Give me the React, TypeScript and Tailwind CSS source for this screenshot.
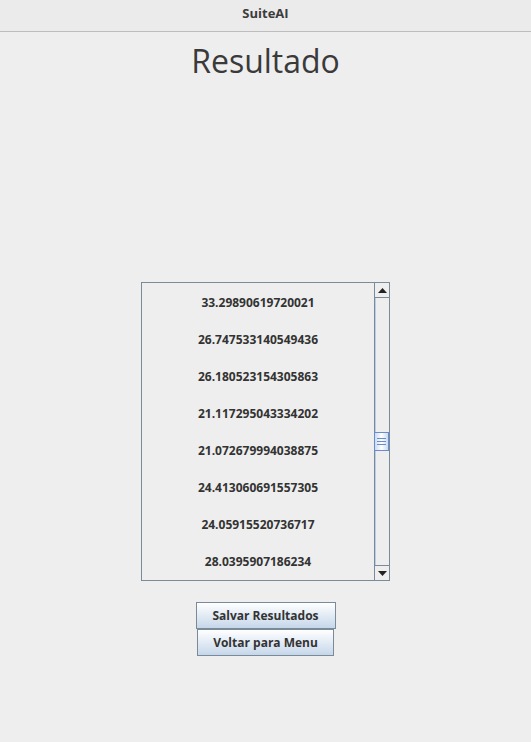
const valores = [
  "33.29890619720021",
  "26.747533140549436",
  "26.180523154305863",
  "21.117295043334202",
  "21.072679994038875",
  "24.413060691557305",
  "24.05915520736717",
  "28.0395907186234",
];

function Arrow({ up }: { up?: boolean }) {
  return (
    <svg width="9" height="5" viewBox="0 0 9 5" className="block">
      {up ? <path d="M0 5 L4.5 0 L9 5 Z" fill="#222" /> : <path d="M0 0 L9 0 L4.5 5 Z" fill="#222" />}
    </svg>
  );
}

function ScrollBar() {
  return (
    <div className="w-[15px] flex flex-col border-l border-[#7a8a99]">
      <div className="h-[15px] flex items-center justify-center bg-[#eeeeee] border-b border-[#7a8a99]">
        <Arrow up />
      </div>
      <div className="flex-1 flex flex-col border-l border-[#b8cfe5]">
        <div className="h-[134px]" />
        <div className="h-[19px] -ml-[2px] border border-[#6d8ad0] bg-gradient-to-r from-[#c9dbf0] via-white to-[#c9dbf0] flex flex-col items-center justify-center gap-[2px]">
          <div className="w-[9px] h-px bg-[#6d8ad0]" />
          <div className="w-[9px] h-px bg-[#6d8ad0]" />
          <div className="w-[9px] h-px bg-[#6d8ad0]" />
        </div>
        <div className="flex-1" />
      </div>
      <div className="h-[15px] flex items-center justify-center bg-[#eeeeee] border-t border-[#7a8a99]">
        <Arrow />
      </div>
    </div>
  );
}

function Botao({ label, w }: { label: string; w: string }) {
  return (
    <button
      className={`${w} h-[27px] border border-[#7a8a99] bg-gradient-to-b from-white to-[#c6d7ea] text-[12px] font-bold text-[#333333] leading-none`}
    >
      {label}
    </button>
  );
}

export default function App() {
  return (
    <div
      className="w-[531px] h-[742px] bg-[#eeeeee] flex flex-col text-[#333333]"
      style={{ fontFamily: '"Open Sans", "Noto Sans", sans-serif' }}
    >
      <header className="h-[32px] shrink-0 bg-[#ebebeb] border-b border-[#bdbdbd] flex items-center justify-center">
        <span className="text-[13px] font-bold text-[#3c3c3c] -mt-[4px]">SuiteAI</span>
      </header>

      <main className="flex-1 flex flex-col items-center">
        <h1 className="mt-[7px] h-[44px] flex items-center text-[32px] leading-none text-[#3a3a3a]">Resultado</h1>

        <div className="mt-[199px] w-[249px] h-[299px] border border-[#7a8a99] flex">
          <div className="flex-1 overflow-hidden flex flex-col pt-px">
            {valores.map((v) => (
              <div key={v} className="h-[37px] shrink-0 flex items-center justify-center text-[12px] font-bold">
                {v}
              </div>
            ))}
          </div>
          <ScrollBar />
        </div>

        <div className="mt-[21px] flex flex-col items-center">
          <Botao label="Salvar Resultados" w="w-[140px]" />
          <Botao label="Voltar para Menu" w="w-[137px]" />
        </div>
      </main>
    </div>
  );
}
